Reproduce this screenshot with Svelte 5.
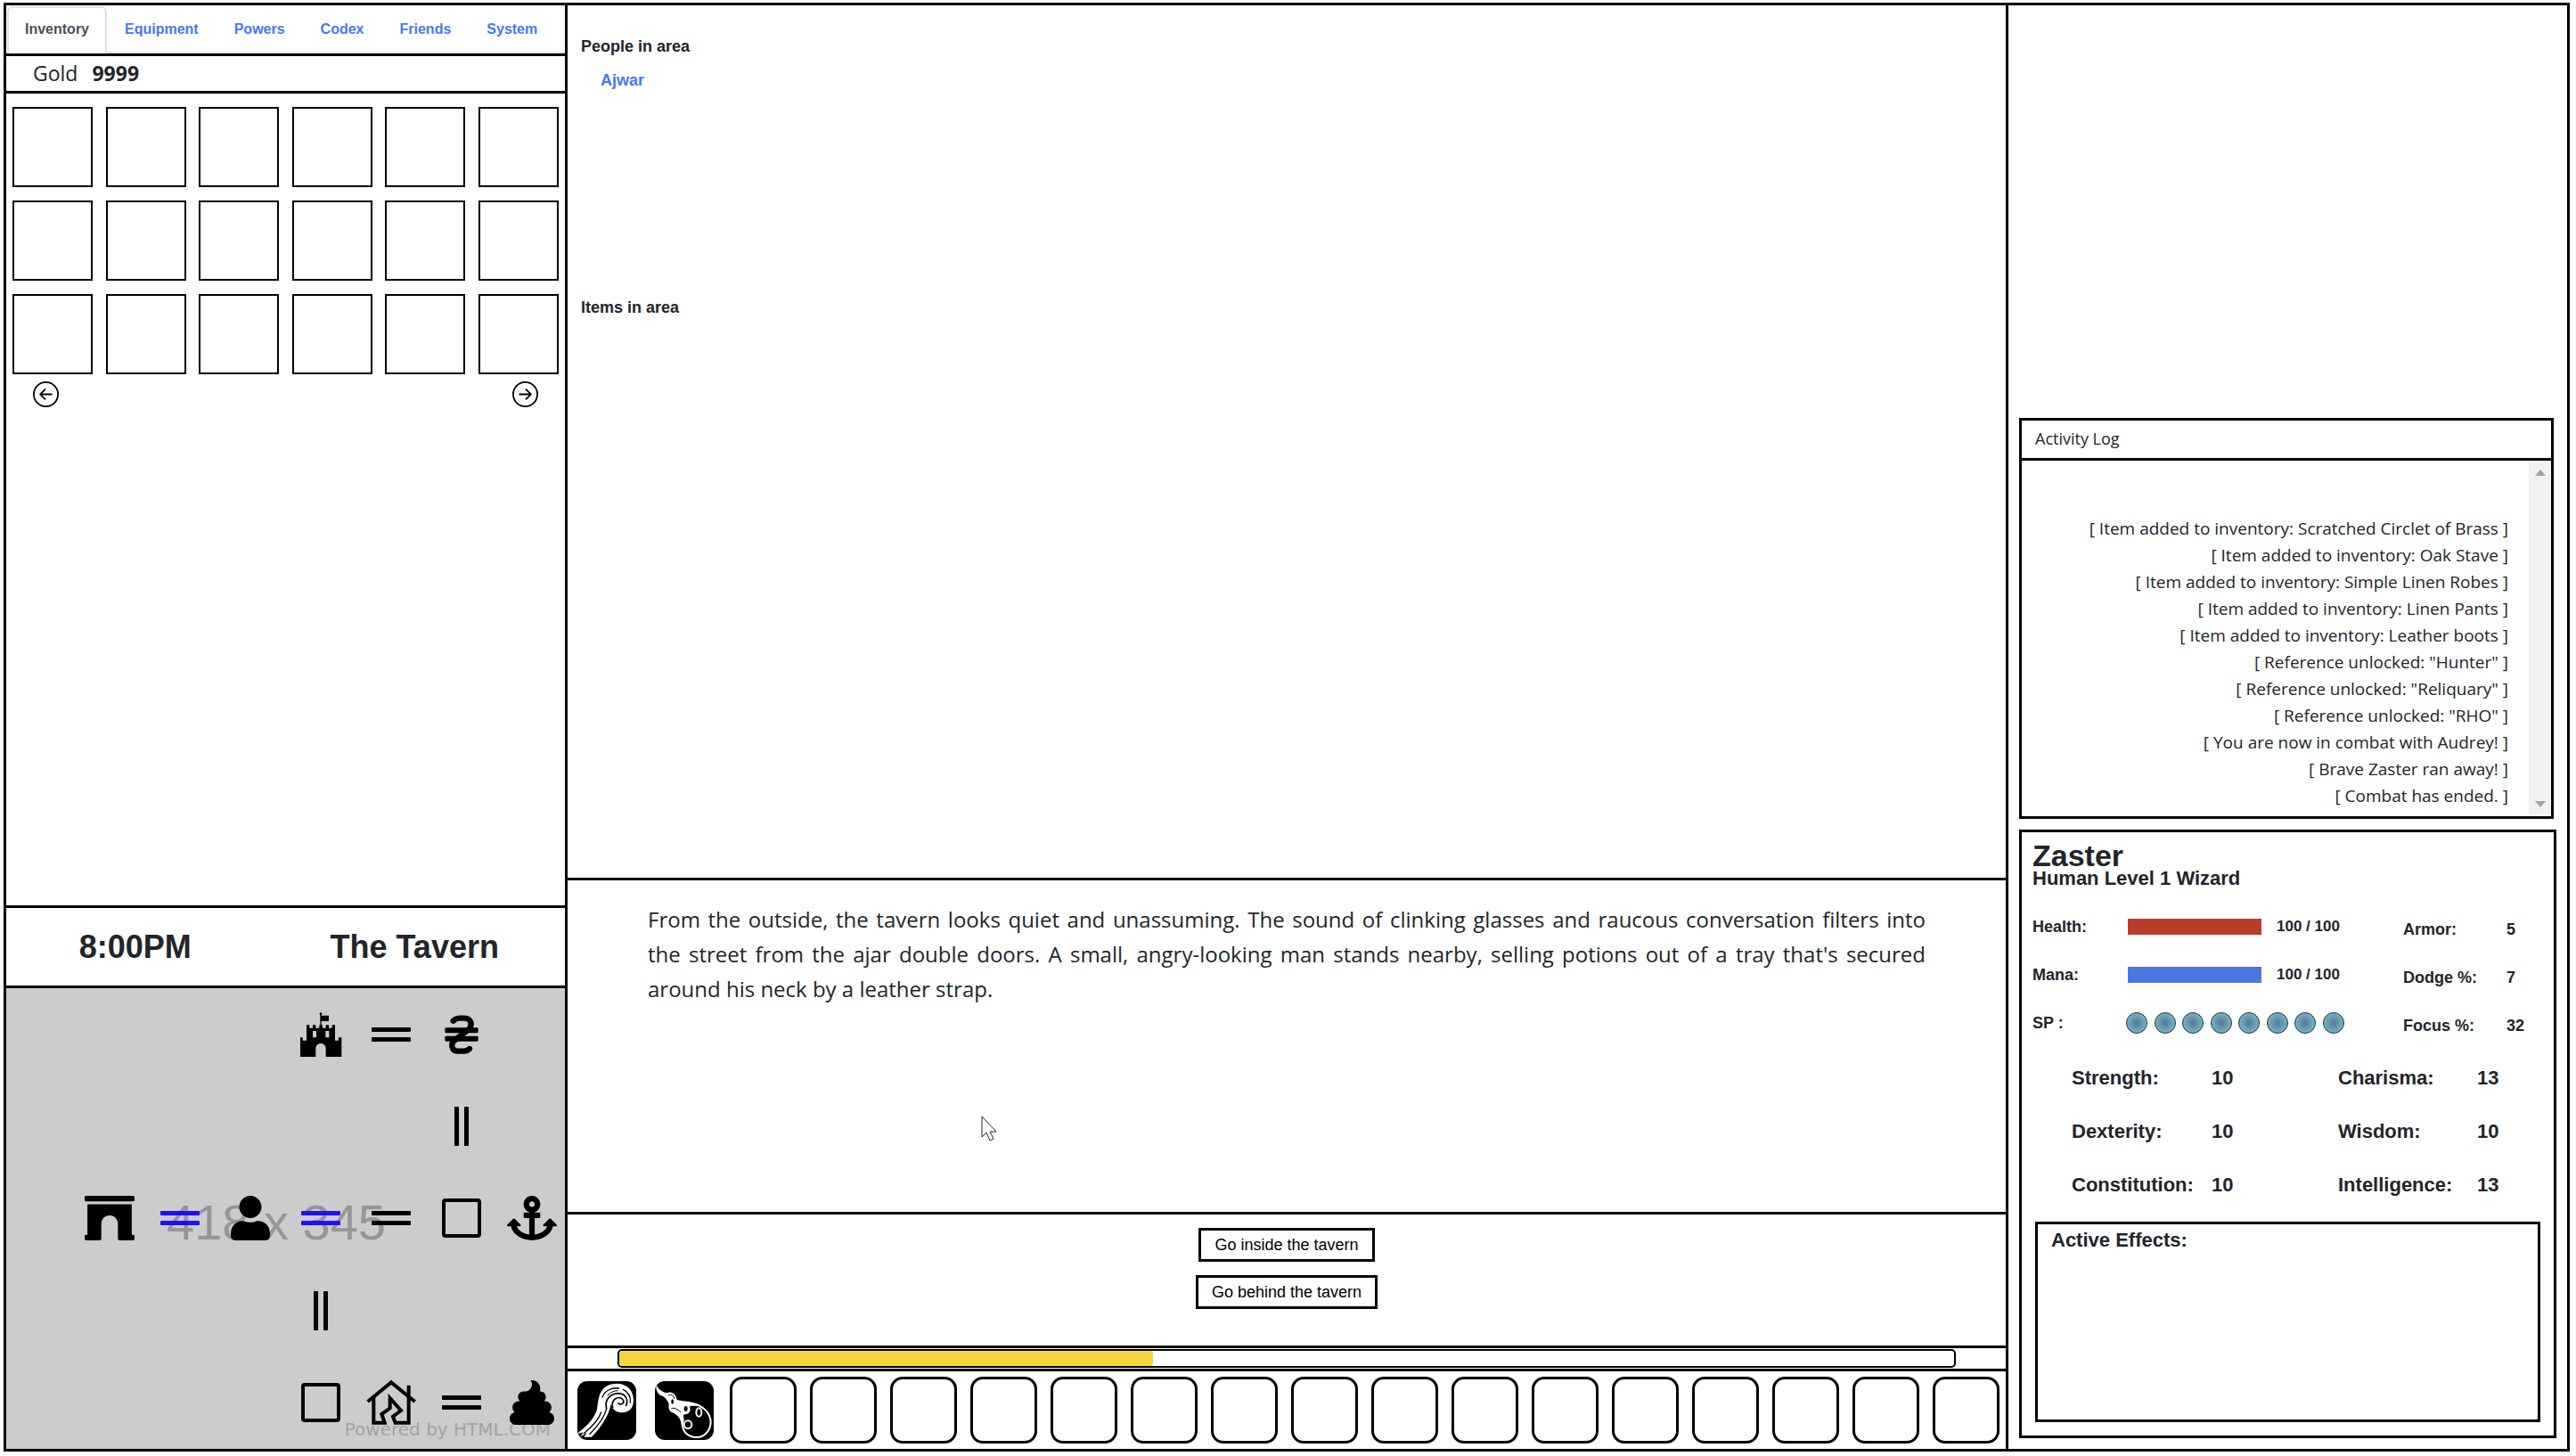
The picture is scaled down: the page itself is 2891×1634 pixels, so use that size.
<script>
  const tabs = ['Inventory', 'Equipment', 'Powers', 'Codex', 'Friends', 'System'];
  const slots = Array.from({ length: 18 }, (_, i) => i + 1);
  const hotbar = Array.from({ length: 16 }, (_, i) => i + 3);
  const orbs = Array.from({ length: 8 }, (_, i) => i);
  const log = [
    'Item added to inventory: Scratched Circlet of Brass',
    'Item added to inventory: Oak Stave',
    'Item added to inventory: Simple Linen Robes',
    'Item added to inventory: Linen Pants',
    'Item added to inventory: Leather boots',
    'Reference unlocked: "Hunter"',
    'Reference unlocked: "Reliquary"',
    'Reference unlocked: "RHO"',
    'You are now in combat with Audrey!',
    'Brave Zaster ran away!',
    'Combat has ended.'
  ];
  const attributes = [
    ['Strength:', 10], ['Charisma:', 13],
    ['Dexterity:', 10], ['Wisdom:', 10],
    ['Constitution:', 10], ['Intelligence:', 13]
  ];
  const defences = [['Armor:', 5], ['Dodge %:', 7], ['Focus %:', 32]];
  // Map rows, eight cells each
  const cells = [
    '', '', '', '', 'castle', 'h', 'bank', '',
    '', '', '', '', '', '', 'v', '',
    '', 'arch', 'hb', 'user', 'hb', 'h', 'square', 'anchor',
    '', '', '', '', 'v', '', '', '',
    '', '', '', '', 'square', 'house', 'h', 'poop'
  ];
  const progress = 40;
  let active = $state('Inventory');
</script>

<div class="page">
  <div class="game">
    <section class="left">
      <nav class="tabs">
        {#each tabs as tab}
          <button class="tab" class:active={tab === active} onclick={() => (active = tab)}>{tab}</button>
        {/each}
      </nav>
      <div class="gold"><span>Gold</span><strong>9999</strong></div>
      <div class="inventory">
        <div class="slots">
          {#each slots as n}
            <button class="slot" aria-label={`Inventory slot ${n}`}></button>
          {/each}
        </div>
        <div class="pager">
          <button aria-label="Previous page">
            <svg viewBox="0 0 16 16"><path d="M1 8a7 7 0 1 0 14 0A7 7 0 0 0 1 8zm15 0A8 8 0 1 1 0 8a8 8 0 0 1 16 0zm-4.5-.5a.5.5 0 0 1 0 1H5.707l2.147 2.146a.5.5 0 0 1-.708.708l-3-3a.5.5 0 0 1 0-.708l3-3a.5.5 0 1 1 .708.708L5.707 7.5H11.5z" /></svg>
          </button>
          <button aria-label="Next page">
            <svg viewBox="0 0 16 16"><path d="M1 8a7 7 0 1 0 14 0A7 7 0 0 0 1 8zm15 0A8 8 0 1 1 0 8a8 8 0 0 1 16 0zM4.5 7.5a.5.5 0 0 0 0 1h5.793l-2.147 2.146a.5.5 0 0 0 .708.708l3-3a.5.5 0 0 0 0-.708l-3-3a.5.5 0 1 0-.708.708L10.293 7.5H4.5z" /></svg>
          </button>
        </div>
      </div>
      <div class="clock"><span>8:00PM</span><span>The Tavern</span></div>
      <div class="map">
        <span class="mark size">418 x 345</span>
        <span class="mark credit">Powered by HTML.COM</span>
        <div class="cells">
          {#each cells as c}
            <div class="cell">
              {#if c === 'h' || c === 'hb'}
                <svg class:blue={c === 'hb'} width="44" height="44" viewBox="0 0 44 44"><rect y="14" width="44" height="5" rx="1" /><rect y="25" width="44" height="5" rx="1" /></svg>
              {:else if c === 'v'}
                <svg width="44" height="44" viewBox="0 0 44 44"><rect x="14" width="5" height="44" rx="1" /><rect x="25" width="5" height="44" rx="1" /></svg>
              {:else if c === 'square'}
                <svg width="44" height="44" viewBox="0 0 44 44"><rect x="2" y="2" width="40" height="40" rx="2" fill="none" stroke="#000" stroke-width="4" /></svg>
              {:else if c === 'castle'}
                <svg width="50" height="52" viewBox="15 42 150 156">
                  <path fill-rule="evenodd" d="M21 195V130H29V140H42V88H52V98H63V88H73V98H85V88H96V98H107V88H117V98H128V88H138V140H150V130H160V195H107V168C107 144 73 144 73 168V195ZM63 108V130H75V108ZM106 108V130H118V108Z" />
                  <path d="M88 50H92V56H117V75H92V98H88Z" /><circle cx="90" cy="50" r="4" />
                </svg>
              {:else if c === 'bank'}
                <svg width="42" height="50" viewBox="500 45 126 150">
                  <rect x="507" y="97" width="112" height="18" rx="4" /><rect x="507" y="125" width="112" height="18" rx="4" />
                  <path fill="none" stroke="#000" stroke-width="19" stroke-linecap="round" stroke-linejoin="round" d="M535 74C542 67 548 65 556 65H572C594 65 602 86 588 101L538 141C524 154 532 176 550 176H570C578 176 584 174 590 168" />
                </svg>
              {:else if c === 'arch'}
                <svg width="56" height="50" viewBox="0 0 576 512"><path d="M560 448h-16V96H32v352H16c-9 0-16 7-16 16v32c0 9 7 16 16 16H176c9 0 16-7 16-16V320c0-53 43-96 96-96s96 43 96 96v176c0 9 7 16 16 16H560c9 0 16-7 16-16v-32c0-9-7-16-16-16zm0-448H16C7 0 0 7 0 16v32c0 9 7 16 16 16h544c9 0 16-7 16-16V16c0-9-7-16-16-16z" /></svg>
              {:else if c === 'user'}
                <svg width="44" height="50" viewBox="0 0 448 512"><path d="M224 256c70.7 0 128-57.3 128-128S294.7 0 224 0 96 57.3 96 128s57.3 128 128 128zm89.6 32h-16.7c-22.2 10.2-46.9 16-72.9 16s-50.6-5.8-72.9-16h-16.7C60.2 288 0 348.2 0 422.4V464c0 26.5 21.5 48 48 48h352c26.5 0 48-21.5 48-48v-41.6c0-74.2-60.2-134.4-134.4-134.4z" /></svg>
              {:else if c === 'anchor'}
                <svg width="56" height="50" viewBox="0 0 576 512"><path d="M12.971 352h32.394C67.172 454.735 181.944 512 288 512c106.229 0 220.853-57.38 242.635-160h32.394c10.691 0 16.045-12.926 8.485-20.485l-67.029-67.029c-4.686-4.686-12.284-4.686-16.971 0l-67.029 67.029c-7.56 7.56-2.206 20.485 8.485 20.485h35.146c-20.29 54.317-84.963 86.588-144.117 94.015V256h52c6.627 0 12-5.373 12-12v-40c0-6.627-5.373-12-12-12h-52v-5.47c37.281-13.22 63.995-48.725 64-90.518C384.005 43.772 341.605.738 289.37.01 235.723-.739 192 42.525 192 96c0 41.798 26.716 77.312 64 90.53V192h-52c-6.627 0-12 5.373-12 12v40c0 6.627 5.373 12 12 12h52v190.015c-58.936-7.399-123.82-39.679-144.117-94.015h35.146c10.691 0 16.045-12.926 8.485-20.485l-67.029-67.029c-4.686-4.686-12.284-4.686-16.971 0L4.485 331.515C-3.074 339.074 2.28 352 12.971 352zM288 64c17.645 0 32 14.355 32 32s-14.355 32-32 32-32-14.355-32-32 14.355-32 32-32z" /></svg>
              {:else if c === 'house'}
                <svg width="58" height="52" viewBox="149 25 174 156">
                  <g fill="none" stroke="#000" stroke-width="12">
                    <path d="M157 100L236 35L316 100M295 45V88" />
                    <path d="M177 86V171H214L204 142L232 122V88L269 130L242 150L250 171H295V86" />
                  </g>
                </svg>
              {:else if c === 'poop'}
                <svg width="50" height="50" viewBox="0 0 512 512"><path d="M451.4 369.1C468.7 356 480 335.4 480 312c0-39.8-32.2-72-72-72h-14.1c13.4-11.7 22.1-28.8 22.1-48 0-35.3-28.7-64-64-64h-5.9c3.6-10.1 5.9-20.7 5.9-32 0-53-43-96-96-96-5.2 0-10.2.7-15.1 1.5C250.3 14.6 256 30.6 256 48c0 44.2-35.8 80-80 80h-16c-35.3 0-64 28.7-64 64 0 19.2 8.7 36.3 22.1 48H104c-39.8 0-72 32.2-72 72 0 23.4 11.3 44 28.6 57.1C26.3 374.6 0 404.1 0 440c0 39.8 32.2 72 72 72h368c39.8 0 72-32.2 72-72 0-35.9-26.3-65.4-60.6-70.9z" /></svg>
              {/if}
            </div>
          {/each}
        </div>
      </div>
    </section>

    <main class="center">
      <section class="area">
        <div class="people">
          <h3>People in area</h3>
          <a href="#ajwar">Ajwar</a>
        </div>
        <h3>Items in area</h3>
      </section>
      <section class="story">
        <p>
          From the outside, the tavern looks quiet and unassuming. The sound of clinking glasses and raucous
          conversation filters into the street from the ajar double doors. A small, angry-looking man stands
          nearby, selling potions out of a tray that's secured around his neck by a leather strap.
        </p>
        <svg class="cursor" width="19" height="29" viewBox="0 0 19 29"><path d="M1 1V24L6 19L10 28L14 26L10 18H17Z" fill="#fff" stroke="#223" stroke-width="1" /></svg>
      </section>
      <section class="actions">
        <button>Go inside the tavern</button>
        <button>Go behind the tavern</button>
      </section>
      <div class="progress-row">
        <div class="progress" role="progressbar" aria-label="Experience" aria-valuenow={progress} aria-valuemin="0" aria-valuemax="100">
          <div class="fill" style:width={`${progress}%`}></div>
        </div>
      </div>
      <div class="hotbar">
        <button class="spell" aria-label="Wind spell">
          <svg viewBox="24 30 198 198">
            <path fill="#fff" d="M28 202C60 178 82 152 90 125C95 92 95 64 122 47C150 32 190 36 206 65C220 95 212 125 190 133C165 141 140 130 137 106C132 145 100 190 72 218L46 218L56 204L34 217L44 202L28 207Z" />
            <g fill="none" stroke="#000" stroke-linecap="round">
              <path stroke-width="5" d="M162 105C172 112 182 104 179 95C174 84 160 83 151 90C142 97 140 108 143 118" />
              <path stroke-width="5" d="M122 122C114 92 135 72 162 71C186 72 197 92 188 112" />
              <path stroke-width="4" d="M108 84C116 62 140 50 164 54M178 58C196 66 205 84 202 102" />
              <path stroke-width="4" d="M122 122C116 152 90 184 66 208M104 135C94 164 70 186 46 206" />
              <path stroke-width="3" d="M126 78C134 68 146 62 160 62" />
            </g>
          </svg>
        </button>
        <button class="spell" aria-label="Potion spell">
          <svg viewBox="285 30 198 198">
            <path fill="none" stroke="#fff" stroke-width="6" d="M354 94C370 102 392 99 410 104C450 112 473 140 473 170C470 205 445 220 425 219C395 218 377 200 377 170C374 150 365 143 352 137" />
            <path fill="#fff" d="M289 40C296 58 308 66 324 70C344 62 356 74 359 93C376 102 402 96 432 112C420 116 408 110 402 116C408 132 398 142 384 142C376 146 388 158 381 168C378 176 378 190 376 184C372 160 368 148 350 138C332 134 330 122 332 108C326 92 318 82 304 78C292 70 288 58 289 40Z" />
            <g fill="#000" stroke="#fff" stroke-width="6">
              <ellipse cx="344" cy="99" rx="7" ry="11" /><ellipse cx="389" cy="123" rx="9" ry="12" />
              <ellipse cx="433" cy="135" rx="9" ry="14" /><circle cx="396" cy="176" r="13" />
            </g>
            <path fill="none" stroke="#000" stroke-width="3" d="M330 78C342 72 350 80 350 90M340 122C350 118 362 126 372 134" />
          </svg>
        </button>
        {#each hotbar as n}
          <button class="hot" aria-label={`Hotbar slot ${n}`}></button>
        {/each}
      </div>
    </main>

    <aside class="right">
      <section class="log">
        <h4>Activity Log</h4>
        <div class="log-body">
          <ul>
            {#each log as line}
              <li>[ {line} ]</li>
            {/each}
          </ul>
          <div class="scroll" aria-hidden="true">
            <svg width="12" height="7" viewBox="0 0 12 7"><path d="M0 7L6 0L12 7Z" /></svg>
            <svg width="12" height="7" viewBox="0 0 12 7"><path d="M0 0L6 7L12 0Z" /></svg>
          </div>
        </div>
      </section>
      <section class="character">
        <h2>Zaster</h2>
        <h5>Human Level 1 Wizard</h5>
        <div class="vitals">
          <div class="pools">
            <span>Health:</span>
            <div class="bar health"></div>
            <span class="amount">100 / 100</span>
            <span>Mana:</span>
            <div class="bar mana"></div>
            <span class="amount">100 / 100</span>
            <span>SP :</span>
            <div class="orbs">
              {#each orbs as _}<i></i>{/each}
            </div>
          </div>
          <div class="defences">
            {#each defences as [name, value]}
              <span>{name}</span><span>{value}</span>
            {/each}
          </div>
        </div>
        <div class="attributes">
          {#each attributes as [name, value]}
            <span>{name}</span><span>{value}</span>
          {/each}
        </div>
        <div class="effects">Active Effects:</div>
      </section>
    </aside>
  </div>
</div>

<style>
  :global(body) {
    margin: 0;
    background: #fff;
  }
  .page, .page :global(*) {
    box-sizing: border-box;
  }
  .page {
    display: flex;
    min-height: 100vh;
    padding: 3px 7px 5px 4px;
    color: #212529;
    font-family: 'Liberation Sans', Arial, sans-serif;
    font-size: 18px;
    font-weight: 700;
  }
  .game {
    flex: 1;
    display: grid;
    grid-template-columns: minmax(0, 627fr) minmax(0, 1620fr) minmax(0, 627fr);
    border: 3px solid #000;
  }
  h2, h3, h4, h5, p, ul {
    margin: 0;
    padding: 0;
  }
  button {
    margin: 0;
    padding: 0;
    border: 0;
    background: none;
    color: inherit;
    font: inherit;
    cursor: pointer;
  }
  svg {
    display: block;
  }

  .left {
    display: flex;
    flex-direction: column;
  }
  .tabs {
    display: flex;
    height: 57px;
    padding: 1px 0 0 1px;
    border-bottom: 3px solid #000;
    box-shadow: inset 0 -2px #dee2e6;
  }
  .tab {
    padding: 0 18px 3px;
    border: 2px solid transparent;
    border-bottom: 0;
    border-radius: 6px 6px 0 0;
    color: #4479f7;
    font-size: 16px;
  }
  .tab.active {
    border-color: #dee2e6;
    background: #fff;
    color: #495057;
  }
  .gold {
    display: flex;
    align-items: center;
    gap: 16px;
    height: 42px;
    padding: 0 0 2px 30px;
    border-bottom: 3px solid #000;
    font-family: 'Open Sans', 'Noto Sans', sans-serif;
    font-size: 23px;
    font-weight: 400;
  }
  .inventory {
    flex: 1;
    padding: 15px 7px;
  }
  .slots {
    display: grid;
    grid-template-columns: repeat(6, 90px);
    justify-content: space-between;
    row-gap: 15px;
  }
  .slot {
    height: 90px;
    border: 2px solid #000;
  }
  .pager {
    display: flex;
    justify-content: space-between;
    padding: 8px 23px;
  }
  .pager svg {
    width: 29px;
    height: 29px;
  }
  .clock {
    display: grid;
    grid-template-columns: 1fr 1fr;
    align-items: center;
    height: 93px;
    border-top: 3px solid #000;
    border-bottom: 3px solid #000;
    font-size: 36px;
    text-align: center;
  }
  .clock span {
    padding-right: 24px;
  }
  .map {
    position: relative;
    aspect-ratio: 627 / 517;
    background: #ccc;
  }
  .mark {
    position: absolute;
    font-weight: 400;
    white-space: nowrap;
  }
  .size {
    left: 180px;
    top: 50%;
    margin-top: -36px;
    color: #969696;
    font-size: 56px;
    line-height: 80px;
  }
  .credit {
    right: 16px;
    bottom: 10px;
    color: #a3a3a3;
    font-family: 'DejaVu Sans', sans-serif;
    font-size: 20px;
    line-height: 24px;
  }
  .cells {
    position: relative;
    display: grid;
    grid-template-columns: repeat(8, minmax(0, 1fr));
    grid-template-rows: repeat(5, minmax(0, 1fr));
    height: 100%;
    margin: 0 -2px;
  }
  .cell {
    display: flex;
    align-items: center;
    justify-content: center;
  }
  .blue {
    fill: #1f10fa;
  }

  .center {
    display: grid;
    grid-template-rows: 982fr 375fr 150fr 26px 87px;
    border-left: 3px solid #000;
    border-right: 3px solid #000;
  }
  .area, .story, .actions, .progress-row {
    border-bottom: 3px solid #000;
  }
  .area {
    padding: 31px 15px;
    line-height: 30px;
  }
  .area h3 {
    font-size: 18px;
  }
  .people {
    height: 293px;
  }
  .people a {
    display: inline-block;
    margin: 8px 22px;
    color: #4479f7;
    text-decoration: none;
  }
  .story {
    position: relative;
    padding: 24px 90px;
  }
  .story p {
    font-family: 'Open Sans', 'Noto Sans', sans-serif;
    font-size: 24px;
    font-weight: 400;
    line-height: 39px;
    text-align: justify;
  }
  .cursor {
    position: absolute;
    left: 464px;
    top: 264px;
  }
  .actions {
    display: flex;
    flex-direction: column;
    align-items: center;
    gap: 15px;
    padding-top: 15px;
  }
  .actions button {
    height: 38px;
    padding: 0 15px;
    border: 3px solid #000;
    color: #000;
    font-size: 18px;
    font-weight: 400;
  }
  .progress-row {
    display: flex;
    justify-content: center;
    padding: 1px 0;
  }
  .progress {
    width: 93%;
    border: 2px solid #000;
    border-radius: 5px;
    overflow: hidden;
  }
  .fill {
    height: 100%;
    border-radius: 3px;
    background: #f5d73d;
  }
  .hotbar {
    display: flex;
    align-items: center;
    justify-content: space-between;
    padding: 0 7px 0 8px;
  }
  .spell {
    width: 66px;
    height: 66px;
    margin: 0 3px;
    border-radius: 11px;
    background: #000;
    overflow: hidden;
  }
  .hot {
    width: 75px;
    height: 75px;
    border: 3px solid #000;
    border-radius: 14px;
  }

  .right {
    display: flex;
    flex-direction: column;
    justify-content: flex-end;
    gap: 12px;
    padding: 12px;
  }
  .log {
    margin-right: 3px;
    border: 3px solid #000;
    font-family: 'Open Sans', 'Noto Sans', sans-serif;
  }
  .log h4 {
    height: 45px;
    padding-left: 15px;
    border-bottom: 3px solid #000;
    font-size: 18px;
    font-weight: 500;
    line-height: 40px;
  }
  .log-body {
    display: flex;
    min-height: 399px;
  }
  .log ul {
    flex: 1;
    align-self: flex-end;
    padding: 0 23px 8px 0;
    list-style: none;
    font-size: 19px;
    font-weight: 400;
    line-height: 30px;
    text-align: right;
  }
  .scroll {
    display: flex;
    flex-direction: column;
    align-items: center;
    justify-content: space-between;
    width: 25px;
    margin-bottom: 2px;
    padding: 10px 0 8px;
    background: #f1f1f1;
    fill: #a3a3a3;
  }
  .character {
    border: 3px solid #000;
    padding: 11px 0 15px;
  }
  h2, h5 {
    padding-left: 12px;
  }
  h2 {
    font-size: 34px;
    line-height: 30px;
  }
  h5 {
    padding-top: 1px;
    font-size: 22px;
    line-height: 20px;
  }
  .vitals {
    display: grid;
    grid-template-columns: 416fr 169fr;
    margin-top: 17px;
    padding-left: 12px;
  }
  .pools {
    display: grid;
    grid-template-columns: 107fr 150fr 159fr;
    grid-auto-rows: 54px;
    align-items: center;
  }
  .bar {
    height: 18px;
  }
  .health {
    background: #b83d2c;
  }
  .mana {
    background: #4b78e0;
  }
  .amount {
    padding-left: 17px;
    font-size: 17px;
  }
  .orbs {
    grid-column: 2 / 4;
    display: flex;
    justify-content: space-between;
    width: 245px;
    margin-left: -2px;
  }
  .orbs i {
    width: 24px;
    height: 24px;
    border: 1px solid #1c2f36;
    border-radius: 50%;
    background: radial-gradient(circle, #4f7c8d, #7ab5cc 75%);
  }
  .defences {
    display: grid;
    grid-template-columns: 116fr 53fr;
    grid-auto-rows: 54px;
    align-items: center;
    padding-top: 3px;
  }
  .attributes {
    display: grid;
    grid-template-columns: 157fr 142fr 156fr 86fr;
    grid-auto-rows: 60px;
    align-items: center;
    margin-top: 2px;
    padding-left: 56px;
    font-size: 22px;
  }
  .effects {
    min-height: 225px;
    margin: 11px 15px 0;
    padding: 5px 15px;
    border: 3px solid #000;
    font-size: 22px;
    line-height: 26px;
  }
</style>
